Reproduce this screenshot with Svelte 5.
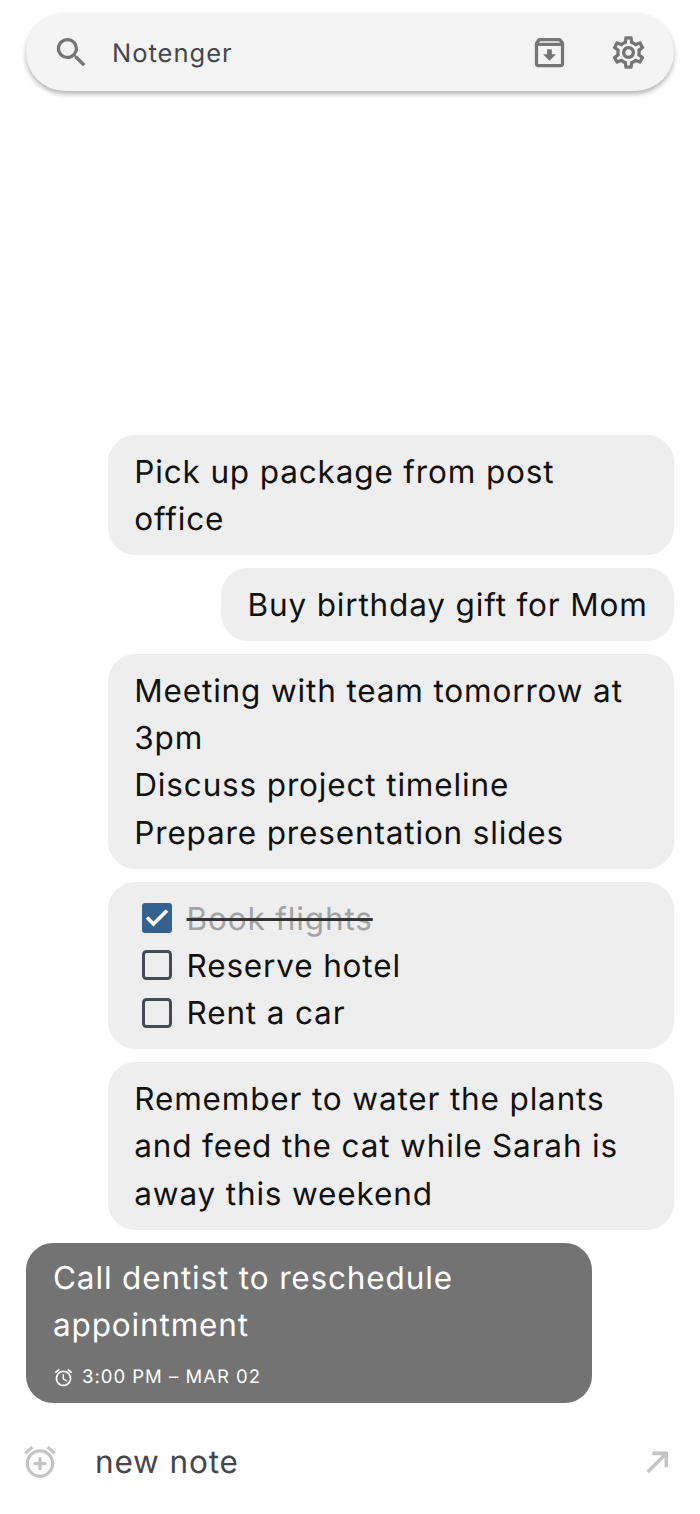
<script>
	const notes = [
		{ lines: ['Pick up package from post office'] },
		{ lines: ['Buy birthday gift for Mom'] },
		{ lines: ['Meeting with team tomorrow at 3pm', 'Discuss project timeline', 'Prepare presentation slides'] },
		{
			todos: [
				{ text: 'Book flights', done: true },
				{ text: 'Reserve hotel', done: false },
				{ text: 'Rent a car', done: false }
			]
		},
		{ lines: ['Remember to water the plants and feed the cat while Sarah is away this weekend'] }
	];
</script>

<div class="page">
	<header class="search">
		<svg class="ico" viewBox="0 0 24 24" width="39" height="39">
			<path d="M15.5 14h-.79l-.28-.27A6.47 6.47 0 0 0 16 9.5 6.5 6.5 0 1 0 9.5 16c1.61 0 3.09-.59 4.23-1.57l.27.28v.79l5 4.99L20.49 19l-4.99-5zm-6 0C7.01 14 5 11.99 5 9.5S7.01 5 9.5 5 14 7.01 14 9.5 11.99 14 9.5 14z" />
		</svg>
		<span class="title">Notenger</span>
		<svg class="ico" viewBox="0 0 24 24" width="39" height="39">
			<path d="M20.54 5.23 19.15 3.55C18.88 3.21 18.47 3 18 3H6c-.47 0-.88.21-1.16.55L3.46 5.23C3.17 5.57 3 6.02 3 6.5V19c0 1.1.9 2 2 2h14c1.1 0 2-.9 2-2V6.5c0-.48-.17-.93-.46-1.27zM6.24 5h11.52l.83 1H5.42l.82-1zM5 19V8h14v11H5zm8.45-9h-2.9v3H8l4 4 4-4h-2.55z" />
		</svg>
		<svg class="ico gear" viewBox="0 0 24 24" width="39" height="39">
			<path d="M19.43 12.98c.04-.32.07-.64.07-.98s-.03-.66-.07-.98l2.11-1.65c.19-.15.24-.42.12-.64l-2-3.46c-.12-.22-.39-.3-.61-.22l-2.49 1c-.52-.4-1.08-.73-1.69-.98l-.38-2.65C14.46 2.18 14.25 2 14 2h-4c-.25 0-.46.18-.49.42l-.38 2.65c-.61.25-1.17.59-1.69.98l-2.49-1c-.23-.09-.49 0-.61.22l-2 3.46c-.13.22-.07.49.12.64l2.11 1.65c-.04.32-.07.65-.07.98s.03.66.07.98l-2.11 1.65c-.19.15-.24.42-.12.64l2 3.46c.12.22.39.3.61.22l2.49-1c.52.4 1.08.73 1.69.98l.38 2.65c.03.24.24.42.49.42h4c.25 0 .46-.18.49-.42l.38-2.65c.61-.25 1.17-.59 1.69-.98l2.49 1c.23.09.49 0 .61-.22l2-3.46c.12-.22.07-.49-.12-.64l-2.11-1.65zM17.45 11.27c.04.31.05.52.05.73 0 .21-.02.43-.05.73l-.14 1.13.89.7 1.08.84-.7 1.21-1.27-.51-1.04-.42-.9.68c-.43.32-.84.56-1.25.73l-1.06.43-.16 1.13-.2 1.35h-1.4l-.19-1.35-.16-1.13-1.06-.43c-.43-.18-.83-.41-1.23-.71l-.91-.7-1.06.43-1.27.51-.7-1.21 1.08-.84.89-.7-.14-1.13C6.52 12.43 6.5 12.2 6.5 12s.02-.43.05-.72l.14-1.13-.89-.7-1.08-.84.7-1.21 1.27.51 1.04.42.9-.68c.43-.32.84-.56 1.25-.73l1.06-.43.16-1.13.2-1.35h1.39l.19 1.35.16 1.13 1.06.43c.43.18.83.41 1.23.71l.91.7 1.06-.43 1.27-.51.7 1.21-1.07.85-.89.7.14 1.13zM12 8c-2.21 0-4 1.79-4 4s1.79 4 4 4 4-1.79 4-4-1.79-4-4-4zm0 6c-1.1 0-2-.9-2-2s.9-2 2-2 2 .9 2 2-.9 2-2 2z" />
		</svg>
	</header>

	<main class="notes">
		{#each notes as note}
			<div class="bubble">
				{#if note.todos}
					{#each note.todos as todo}
						<div class="todo">
							{#if todo.done}
								<svg class="box" viewBox="0 0 30 30" width="30" height="30">
									<rect width="30" height="30" rx="3" fill="#35618f" />
									<path d="M5 14.5l6.5 6.5L25 7.5" fill="none" stroke="#fff" stroke-width="3.6" />
								</svg>
							{:else}
								<svg class="box" viewBox="0 0 30 30" width="30" height="30">
									<rect x="1.5" y="1.5" width="27" height="27" rx="3" fill="none" stroke="#464a53" stroke-width="3" />
								</svg>
							{/if}
							<span class:done={todo.done}>{todo.text}</span>
						</div>
					{/each}
				{:else}
					{#each note.lines as line}
						<div>{line}</div>
					{/each}
				{/if}
			</div>
		{/each}

		<div class="bubble reminder">
			<div>Call dentist to reschedule appointment</div>
			<div class="when">
				<svg viewBox="0 0 24 24" width="21" height="21">
					<path fill="#fff" d="M22 5.72l-4.6-3.86-1.29 1.53 4.6 3.86L22 5.72zM7.88 3.39 6.6 1.86 2 5.71l1.29 1.53 4.59-3.85zM12.5 8H11v6l4.75 2.85.75-1.23-4-2.37V8zM12 4c-4.97 0-9 4.03-9 9s4.03 9 9 9 9-4.03 9-9-4.03-9-9-9zm0 16c-3.87 0-7-3.13-7-7s3.13-7 7-7 7 3.13 7 7-3.13 7-7 7z" />
				</svg>
				<span>3:00 PM – MAR 02</span>
			</div>
		</div>
	</main>

	<footer class="composer">
		<svg class="faint" viewBox="0 0 24 24" width="38" height="38">
			<path d="M7.88 3.39 6.6 1.86 2 5.71l1.29 1.53 4.59-3.85zM22 5.72l-4.6-3.86-1.29 1.53 4.6 3.86L22 5.72zM12 4c-4.97 0-9 4.03-9 9s4.03 9 9 9 9-4.03 9-9-4.03-9-9-9zm0 16c-3.87 0-7-3.13-7-7s3.13-7 7-7 7 3.13 7 7-3.13 7-7 7zm1-11h-2v3H8v2h3v3h2v-3h3v-2h-3V9z" />
		</svg>
		<span class="placeholder">new note</span>
		<svg class="send" viewBox="0 0 24 24" width="32" height="32">
			<path d="M5 19.5 18 6.5M8.5 5.5H19V16" fill="none" stroke="#c4c4c4" stroke-width="2.7" />
		</svg>
	</footer>
</div>

<style>
	:global(body) {
		background: #fff;
	}

	.page {
		display: flex;
		flex-direction: column;
		height: 1514px;
		overflow: hidden;
		font-family: Inter, 'Liberation Sans', sans-serif;
		font-size: 31.5px;
		line-height: 47.25px;
		letter-spacing: 0.85px;
		color: #111;
		text-rendering: geometricPrecision;
	}

	.search {
		display: flex;
		align-items: center;
		flex: none;
		height: 78px;
		margin: 13px 26px 0;
		padding: 0 26.5px 0 25.5px;
		background: #f4f4f4;
		border-radius: 39px;
		box-shadow: 0 3px 5px rgba(0, 0, 0, 0.3);
	}

	.ico {
		flex: none;
		fill: #757575;
	}

	.title {
		flex: 1;
		margin-left: 21.5px;
		padding-top: 3px;
		font-size: 25.5px;
		letter-spacing: 1px;
		color: #44474e;
	}

	.gear {
		margin-left: 39.5px;
	}

	.notes {
		flex: 1;
		display: flex;
		flex-direction: column;
		align-items: flex-end;
		justify-content: flex-end;
		gap: 13.25px;
		padding: 0 26px;
	}

	.bubble {
		box-sizing: border-box;
		max-width: 566px;
		padding: 12.75px 26.25px;
		background: #eee;
		border-radius: 27px;
	}

	.bubble:not(:nth-child(2)) {
		width: 566px;
	}

	.todo {
		display: flex;
		align-items: center;
		gap: 14.75px;
		padding-left: 7.5px;
	}

	.box {
		flex: none;
	}

	.done {
		color: #a3a3a3;
		text-decoration: line-through;
		text-decoration-color: #333;
	}

	.reminder {
		align-self: flex-start;
		padding: 11px 27px 12px;
		background: #737373;
		color: #fff;
	}

	.when {
		display: flex;
		align-items: center;
		gap: 8px;
		margin-top: 14.75px;
		font-size: 18.5px;
		line-height: 28px;
		letter-spacing: 1px;
	}

	.composer {
		display: flex;
		align-items: center;
		flex: none;
		box-sizing: border-box;
		height: 111px;
		padding: 6px 27px 0 21px;
	}

	.faint {
		flex: none;
		fill: #c4c4c4;
	}

	.send {
		flex: none;
	}

	.placeholder {
		flex: 1;
		margin-left: 36px;
		color: #44474e;
	}
</style>
